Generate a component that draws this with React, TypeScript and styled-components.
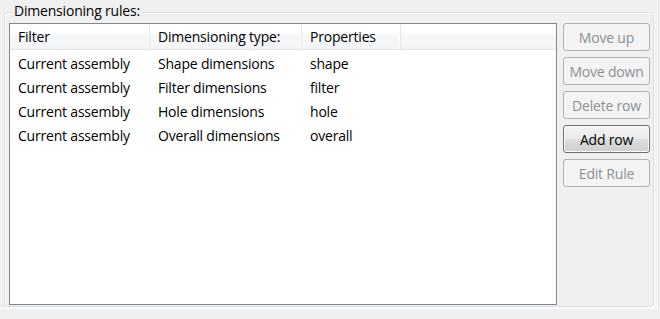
import React from "react";
import styled, { createGlobalStyle } from "styled-components";

const Global = createGlobalStyle`
  html, body { margin: 0; padding: 0; background: #f0f0f0; }
  body { font-family: "Open Sans", "Noto Sans", sans-serif; font-size: 14px; color: #000; letter-spacing: -0.2px; }
`;

const Page = styled.div`
  width: 658px;
  height: 309px;
  padding: 12px 0 0 4px;
  box-sizing: border-box;
  border-right: 1px solid #fbfbfb;
  border-bottom: 1px solid #fbfbfb;
  box-shadow: 1px 1px 0 #e3e3e3;
`;

const Group = styled.div`
  position: relative;
  width: 650px;
  height: 295px;
  box-sizing: border-box;
  border: 1px solid #d5dfe5;
  border-radius: 3px;
  box-shadow: inset 1px 1px 0 #ffffff, 1px 1px 0 #ffffff;
  padding: 10px 3px 2px 4px;
  display: flex;
  gap: 6px;
`;

const Legend = styled.span`
  position: absolute;
  left: 7px;
  top: -12px;
  padding: 0 2px;
  background: #f0f0f0;
  line-height: 20px;
  font-size: 14px;
  color: #000;
`;

const List = styled.div`
  width: 549px;
  height: 282px;
  box-sizing: border-box;
  border: 1px solid #828790;
  background: #fff;
  display: flex;
  flex-direction: column;
`;

const cols = "140px 152px 99px 1fr";

const Header = styled.div`
  display: grid;
  grid-template-columns: ${cols};
  height: 26px;
  box-sizing: border-box;
  border-bottom: 1px solid #e5e5e5;
  background: linear-gradient(#ffffff 0%, #ffffff 40%, #f7f8fa 41%, #f3f4f6 100%);
`;

const HeaderCell = styled.div`
  padding-left: 8px;
  line-height: 25px;
  border-right: 1px solid #e5e5e5;
  box-shadow: inset -1px 0 0 #ffffff;
  white-space: nowrap;
  overflow: hidden;
`;

const Body = styled.div`
  padding-top: 2px;
`;

const Row = styled.div`
  display: grid;
  grid-template-columns: ${cols};
  height: 24px;
`;

const Cell = styled.div`
  padding-left: 8px;
  line-height: 24px;
  white-space: nowrap;
  overflow: hidden;
`;

const Buttons = styled.div`
  display: flex;
  flex-direction: column;
  gap: 6px;
`;

const Button = styled.button<{ $enabled?: boolean }>`
  width: 87px;
  height: 28px;
  box-sizing: border-box;
  padding: 0;
  font-family: inherit;
  font-size: 14px;
  letter-spacing: -0.2px;
  border-radius: 3px;
  border: 1px solid ${(p) => (p.$enabled ? "#707070" : "#adb2b5")};
  color: ${(p) => (p.$enabled ? "#000" : "#8b9095")};
  background: ${(p) =>
    p.$enabled
      ? "linear-gradient(#f2f2f2 0%, #ebebeb 50%, #dddddd 51%, #cfcfcf 100%)"
      : "#f4f4f4"};
  box-shadow: ${(p) => (p.$enabled ? "inset 0 0 0 1px #fcfcfc" : "none")};
  white-space: nowrap;
`;

const rows = [
  ["Current assembly", "Shape dimensions", "shape"],
  ["Current assembly", "Filter dimensions", "filter"],
  ["Current assembly", "Hole dimensions", "hole"],
  ["Current assembly", "Overall dimensions", "overall"],
];

export default function App() {
  return (
    <>
      <Global />
      <Page>
        <Group>
          <Legend>Dimensioning rules:</Legend>
          <List>
            <Header>
              <HeaderCell>Filter</HeaderCell>
              <HeaderCell>Dimensioning type:</HeaderCell>
              <HeaderCell>Properties</HeaderCell>
              <div />
            </Header>
            <Body>
              {rows.map((r, i) => (
                <Row key={i}>
                  {r.map((c, j) => (
                    <Cell key={j}>{c}</Cell>
                  ))}
                  <div />
                </Row>
              ))}
            </Body>
          </List>
          <Buttons>
            <Button>Move up</Button>
            <Button>Move down</Button>
            <Button>Delete row</Button>
            <Button $enabled>Add row</Button>
            <Button>Edit Rule</Button>
          </Buttons>
        </Group>
      </Page>
    </>
  );
}
